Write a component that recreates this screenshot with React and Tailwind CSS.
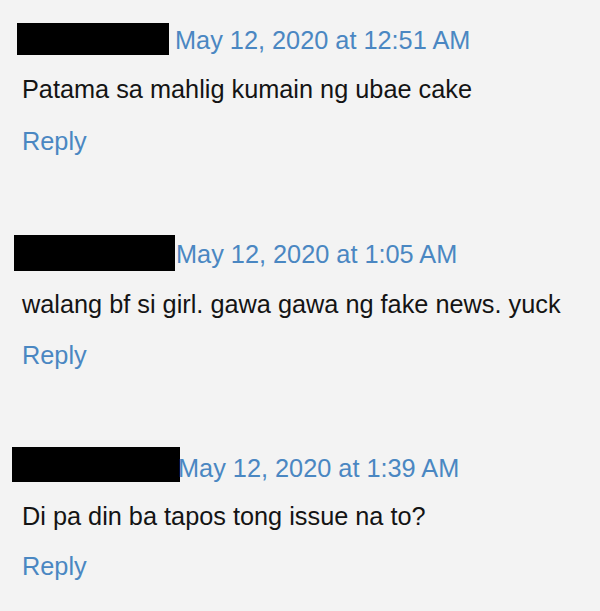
export default function App() {
  const font = { fontFamily: '"Liberation Sans", Arial, sans-serif' };
  return (
    <div className="w-[600px] h-[611px] bg-[#f3f3f3] overflow-hidden pt-[23px]" style={font}>
      {/* Comment 1 */}
      <div className="flex items-start">
        <div className="ml-[17px] w-[152px] h-[32px] bg-black shrink-0" />
        <span className="ml-[6px] mt-[3px] text-[25.3px] leading-[28px] text-[#4a87c2] whitespace-nowrap">May 12, 2020 at 12:51 AM</span>
      </div>
      <p className="mt-[20px] pl-[22px] text-[25.3px] leading-[28px] text-[#141414] whitespace-nowrap">Patama sa mahlig kumain ng ubae cake</p>
      <p className="mt-[24px] pl-[22px] text-[25.3px] leading-[28px] text-[#4a87c2]">Reply</p>

      {/* Comment 2 */}
      <div className="mt-[80px] flex items-start">
        <div className="ml-[14px] w-[161px] h-[36px] bg-black shrink-0" />
        <span className="ml-[1px] mt-[5px] text-[25.3px] leading-[28px] text-[#4a87c2] whitespace-nowrap">May 12, 2020 at 1:05 AM</span>
      </div>
      <p className="mt-[19px] pl-[22px] text-[25.3px] leading-[28px] text-[#141414] whitespace-nowrap">walang bf si girl. gawa gawa ng fake news. yuck</p>
      <p className="mt-[23px] pl-[22px] text-[25.3px] leading-[28px] text-[#4a87c2]">Reply</p>

      {/* Comment 3 */}
      <div className="mt-[78px] flex items-start">
        <div className="ml-[12px] w-[168px] h-[35px] bg-black shrink-0" />
        <span className="ml-[-2px] mt-[7px] text-[25.3px] leading-[28px] text-[#4a87c2] whitespace-nowrap">May 12, 2020 at 1:39 AM</span>
      </div>
      <p className="mt-[20px] pl-[22px] text-[25.3px] leading-[28px] text-[#141414] whitespace-nowrap">Di pa din ba tapos tong issue na to?</p>
      <p className="mt-[22px] pl-[22px] text-[25.3px] leading-[28px] text-[#4a87c2]">Reply</p>
    </div>
  );
}
